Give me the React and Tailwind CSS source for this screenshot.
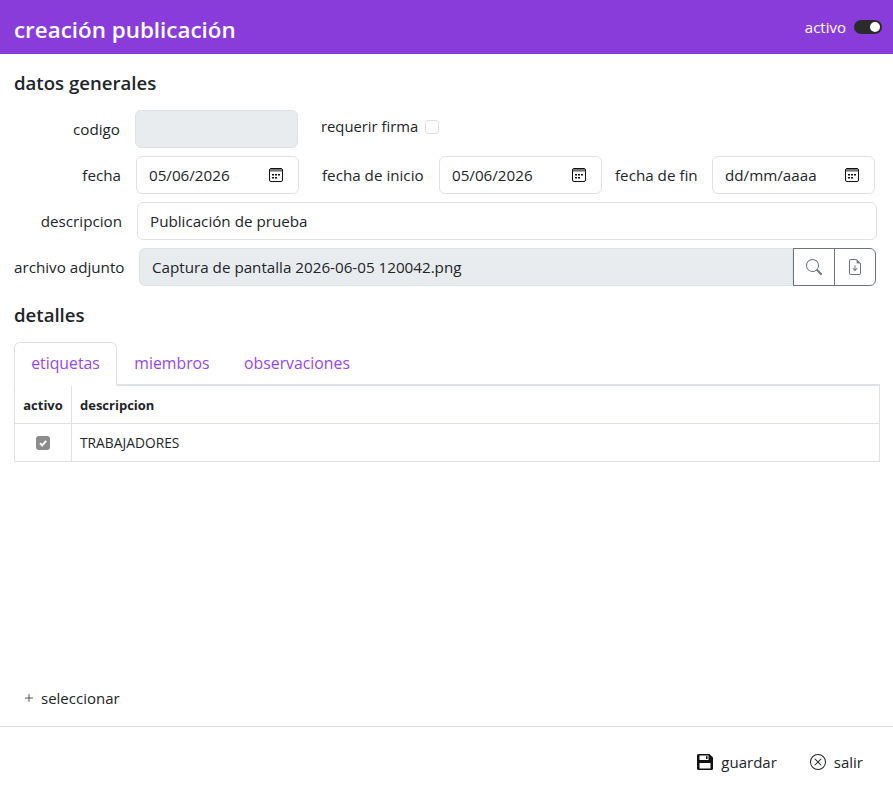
import React from "react";
import { BsSearch, BsFileEarmarkArrowDown, BsXCircle, BsPlus } from "react-icons/bs";

const CalIcon = () => (
  <svg width="14" height="14" viewBox="0 0 14 14" fill="none" className="shrink-0">
    <rect x="0.5" y="0.5" width="13" height="13" rx="1.5" stroke="#111" strokeWidth="1" />
    <rect x="1" y="1" width="12" height="2.6" fill="#777" />
    <path d="M3 6h2v1.6H3zM6 6h2v1.6H6zM9 6h2v1.6H9zM3 9h2v1.6H3zM6 9h2v1.6H6z" fill="#111" />
  </svg>
);

const SaveIcon = () => (
  <svg width="16" height="16" viewBox="0 0 16 16" className="shrink-0">
    <path fillRule="evenodd" d="M1.5 0H12.5L16 3.5V14.5A1.5 1.5 0 0 1 14.5 16H1.5A1.5 1.5 0 0 1 0 14.5V1.5A1.5 1.5 0 0 1 1.5 0ZM2.5 9V14.4H13.5V9ZM2.5 1.6V6H11.5V1.6ZM9 2.2H10.6V5H9Z" fill="#111" />
  </svg>
);

const inputCls = "h-[38px] border border-[#dee2e6] rounded-md bg-white flex items-center pl-3 text-[#212529]";

const DateField = ({ value, className }) => (
  <div className={`${inputCls} justify-between pr-[15px] ${className}`}>
    <span>{value}</span>
    <CalIcon />
  </div>
);

const Label = ({ children, className }) => (
  <label className={`text-[#212529] shrink-0 whitespace-nowrap ${className}`}>{children}</label>
);

export default function App() {
  return (
    <div className="w-[893px] h-[795px] bg-white flex flex-col text-[15.2px] text-[#212529] overflow-hidden font-['Open_Sans',sans-serif]">
      <header className="h-[54px] shrink-0 bg-[#8a3cdb] flex items-center justify-between pl-[14px] pr-[11px] text-white">
        <h1 className="text-[22.4px] font-semibold leading-none mt-[6px]">creación publicación</h1>
        <div className="flex items-center gap-[8px]">
          <span className="text-[15px]">activo</span>
          <span className="w-[28px] h-[14px] rounded-full bg-[#2b2b2b] flex items-center justify-end pr-[2px]">
            <span className="w-[10px] h-[10px] rounded-full bg-white" />
          </span>
        </div>
      </header>

      <main className="flex-1 flex flex-col pl-[14px] pr-[13px] min-h-0">
        <h2 className="text-[18.6px] font-semibold leading-none mt-[20px] h-[36px]">datos generales</h2>

        <div className="flex items-center h-[38px]">
          <Label className="w-[106px] text-right">codigo</Label>
          <div className="ml-[15px] w-[163px] h-[38px] rounded-md bg-[#e9ecef] border border-[#dee2e6]" />
          <div className="ml-[23px] flex items-center gap-[7px] -mt-[5px] text-[14.8px]">
            <span>requerir firma</span>
            <span className="w-[14px] h-[14px] rounded-[3px] border border-[#dee2e6] bg-white" />
          </div>
        </div>

        <div className="flex items-center h-[38px] mt-[8px]">
          <Label className="w-[107px] text-right">fecha</Label>
          <DateField value="05/06/2026" className="ml-[15px] w-[163px]" />
          <Label className="ml-[23px] w-[102px]">fecha de inicio</Label>
          <DateField value="05/06/2026" className="ml-[15px] w-[163px]" />
          <Label className="ml-[13px] w-[83px]">fecha de fin</Label>
          <DateField value="dd/mm/aaaa" className="ml-[14px] w-[163px]" />
        </div>

        <div className="flex items-center h-[38px] mt-[8px]">
          <Label className="w-[108px] text-right">descripcion</Label>
          <div className={`${inputCls} ml-[15px] w-[740px]`}>Publicación de prueba</div>
        </div>

        <div className="flex items-center h-[38px] mt-[8px]">
          <Label className="w-[110px] text-right">archivo adjunto</Label>
          <div className="ml-[15px] flex h-[38px] w-[737px]">
            <div className="flex-1 bg-[#e9ecef] border border-[#dee2e6] rounded-l-md flex items-center px-3">
              Captura de pantalla 2026-06-05 120042.png
            </div>
            <button className="w-[42px] border border-[#6c757d] flex items-center justify-center text-[#6c757d]">
              <BsSearch size={16} />
            </button>
            <button className="w-[42px] -ml-px border border-[#6c757d] rounded-r-md flex items-center justify-center text-[#6c757d]">
              <BsFileEarmarkArrowDown size={16} />
            </button>
          </div>
        </div>

        <h2 className="text-[18.6px] font-semibold leading-none mt-[20px] h-[36px]">detalles</h2>

        <div className="flex h-[44px] border-b-2 border-[#dee2e6] text-[#9747e8] text-[15.8px]">
          <div className="h-[44px] w-[103px] border border-[#dee2e6] border-b-white border-b-2 rounded-t-md bg-white flex items-center justify-center">etiquetas</div>
          <div className="w-[110px] flex items-center justify-center pt-[2px]">miembros</div>
          <div className="w-[140px] flex items-center justify-center pt-[2px]">observaciones</div>
        </div>

        <table className="w-[866px] border-collapse text-[13.8px]">
          <tbody>
            <tr className="h-[37px]">
              <th className="w-[57px] border border-t-0 border-[#dee2e6] font-bold text-center text-[13px] pt-[2px]">activo</th>
              <th className="border border-t-0 border-[#dee2e6] font-bold text-left pl-2 text-[13px] pt-[2px]">descripcion</th>
            </tr>
            <tr className="h-[38px]">
              <td className="border border-[#dee2e6] text-center">
                <span className="inline-flex w-[14px] h-[14px] rounded-[3px] bg-[#8c8c8c] items-center justify-center align-middle">
                  <svg width="10" height="10" viewBox="0 0 10 10" fill="none">
                    <path d="M2 5.2 4.2 7.4 8.2 2.8" stroke="#fff" strokeWidth="2" />
                  </svg>
                </span>
              </td>
              <td className="border border-[#dee2e6] pl-2 pt-[2px]">TRABAJADORES</td>
            </tr>
          </tbody>
        </table>

        <div className="flex-1" />
        <button className="flex items-center gap-[4px] pl-[7px] h-[20px] mb-[18px] text-[15px]">
          <BsPlus size={16} className="text-[#555]" />
          <span>seleccionar</span>
        </button>
      </main>

      <footer className="h-[69px] shrink-0 border-t border-[#dee2e6] flex items-center justify-end gap-[33px] pr-[30px] pt-[2px] text-[15px]">
        <button className="flex items-center gap-[8px]"><SaveIcon /><span>guardar</span></button>
        <button className="flex items-center gap-[8px]"><BsXCircle size={16} /><span>salir</span></button>
      </footer>
    </div>
  );
}
